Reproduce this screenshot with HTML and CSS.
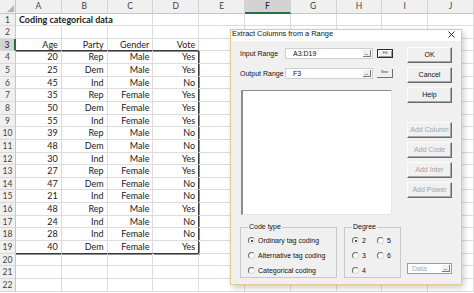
FILE: index.html
```html
<!DOCTYPE html>
<html>
<head>
<meta charset="utf-8">
<link rel="stylesheet" href="styles.css">
</head>
<body>
<div class="sheet">
  <div class="corner"><svg class="tri" width="7" height="7" viewBox="0 0 7 7"><path d="M7 0 V7 H0 Z" fill="#b4b4b4"/></svg></div>
  <div class="h">A</div><div class="h">B</div><div class="h">C</div><div class="h">D</div><div class="h">E</div><div class="h sel">F</div><div class="h">G</div><div class="h">H</div><div class="h">I</div><div class="h">J</div>

  <div class="r">1</div><div class="c title nob">Coding categorical data</div><div class="c nob"></div><div class="c"></div><div class="c"></div><div class="c"></div><div class="c"></div><div class="c"></div><div class="c"></div><div class="c"></div><div class="c"></div>
  <div class="r">2</div><div class="c"></div><div class="c"></div><div class="c"></div><div class="c"></div><div class="c"></div><div class="c"></div><div class="c"></div><div class="c"></div><div class="c"></div><div class="c"></div>
  <div class="r rsel">3</div><div class="c n th">Age</div><div class="c n th">Party</div><div class="c n th">Gender</div><div class="c n th">Vote</div><div class="c"></div><div class="c"></div><div class="c"></div><div class="c"></div><div class="c"></div><div class="c"></div>
  <div class="r">4</div><div class="c n">20</div><div class="c n">Rep</div><div class="c n">Male</div><div class="c n tr">Yes</div><div class="c"></div><div class="c"></div><div class="c"></div><div class="c"></div><div class="c"></div><div class="c"></div>
  <div class="r">5</div><div class="c n">25</div><div class="c n">Dem</div><div class="c n">Male</div><div class="c n tr">Yes</div><div class="c"></div><div class="c"></div><div class="c"></div><div class="c"></div><div class="c"></div><div class="c"></div>
  <div class="r">6</div><div class="c n">45</div><div class="c n">Ind</div><div class="c n">Male</div><div class="c n tr">No</div><div class="c"></div><div class="c"></div><div class="c"></div><div class="c"></div><div class="c"></div><div class="c"></div>
  <div class="r">7</div><div class="c n">35</div><div class="c n">Rep</div><div class="c n">Female</div><div class="c n tr">Yes</div><div class="c"></div><div class="c"></div><div class="c"></div><div class="c"></div><div class="c"></div><div class="c"></div>
  <div class="r">8</div><div class="c n">50</div><div class="c n">Dem</div><div class="c n">Female</div><div class="c n tr">Yes</div><div class="c"></div><div class="c"></div><div class="c"></div><div class="c"></div><div class="c"></div><div class="c"></div>
  <div class="r">9</div><div class="c n">55</div><div class="c n">Ind</div><div class="c n">Female</div><div class="c n tr">Yes</div><div class="c"></div><div class="c"></div><div class="c"></div><div class="c"></div><div class="c"></div><div class="c"></div>
  <div class="r">10</div><div class="c n">39</div><div class="c n">Rep</div><div class="c n">Male</div><div class="c n tr">No</div><div class="c"></div><div class="c"></div><div class="c"></div><div class="c"></div><div class="c"></div><div class="c"></div>
  <div class="r">11</div><div class="c n">48</div><div class="c n">Dem</div><div class="c n">Male</div><div class="c n tr">No</div><div class="c"></div><div class="c"></div><div class="c"></div><div class="c"></div><div class="c"></div><div class="c"></div>
  <div class="r">12</div><div class="c n">30</div><div class="c n">Ind</div><div class="c n">Male</div><div class="c n tr">Yes</div><div class="c"></div><div class="c"></div><div class="c"></div><div class="c"></div><div class="c"></div><div class="c"></div>
  <div class="r">13</div><div class="c n">27</div><div class="c n">Rep</div><div class="c n">Female</div><div class="c n tr">Yes</div><div class="c"></div><div class="c"></div><div class="c"></div><div class="c"></div><div class="c"></div><div class="c"></div>
  <div class="r">14</div><div class="c n">47</div><div class="c n">Dem</div><div class="c n">Female</div><div class="c n tr">No</div><div class="c"></div><div class="c"></div><div class="c"></div><div class="c"></div><div class="c"></div><div class="c"></div>
  <div class="r">15</div><div class="c n">21</div><div class="c n">Ind</div><div class="c n">Female</div><div class="c n tr">No</div><div class="c"></div><div class="c"></div><div class="c"></div><div class="c"></div><div class="c"></div><div class="c"></div>
  <div class="r">16</div><div class="c n">48</div><div class="c n">Rep</div><div class="c n">Male</div><div class="c n tr">Yes</div><div class="c"></div><div class="c"></div><div class="c"></div><div class="c"></div><div class="c"></div><div class="c"></div>
  <div class="r">17</div><div class="c n">24</div><div class="c n">Ind</div><div class="c n">Male</div><div class="c n tr">No</div><div class="c"></div><div class="c"></div><div class="c"></div><div class="c"></div><div class="c"></div><div class="c"></div>
  <div class="r">18</div><div class="c n">28</div><div class="c n">Ind</div><div class="c n">Female</div><div class="c n tr">No</div><div class="c"></div><div class="c"></div><div class="c"></div><div class="c"></div><div class="c"></div><div class="c"></div>
  <div class="r">19</div><div class="c n tb">40</div><div class="c n tb">Dem</div><div class="c n tb">Female</div><div class="c n tr tb">Yes</div><div class="c"></div><div class="c"></div><div class="c"></div><div class="c"></div><div class="c"></div><div class="c"></div>
  <div class="r">20</div><div class="c"></div><div class="c"></div><div class="c"></div><div class="c"></div><div class="c"></div><div class="c"></div><div class="c"></div><div class="c"></div><div class="c"></div><div class="c"></div>
  <div class="r">21</div><div class="c"></div><div class="c"></div><div class="c"></div><div class="c"></div><div class="c"></div><div class="c"></div><div class="c"></div><div class="c"></div><div class="c"></div><div class="c"></div>
  <div class="r">22</div><div class="c"></div><div class="c"></div><div class="c"></div><div class="c"></div><div class="c"></div><div class="c"></div><div class="c"></div><div class="c"></div><div class="c"></div><div class="c"></div>
</div>

<div class="dlg">
  <div class="titlebar">
    <span>Extract Columns from a Range</span>
    <svg class="close" width="7" height="7" viewBox="0 0 7 7"><path d="M0.5 0.5 L6.5 6.5 M6.5 0.5 L0.5 6.5" stroke="#111" stroke-width="0.9"/></svg>
  </div>
  <div class="dbody">
    <div class="main">
      <div class="frow">
        <span class="lbl">Input Range</span>
        <div class="tbox"><span>A3:D19</span><span class="mini">_</span></div>
        <span class="tiny fill">Fill</span>
      </div>
      <div class="frow r2">
        <span class="lbl">Output Range</span>
        <div class="tbox"><span>F3</span><span class="mini">_</span></div>
        <span class="tiny new">New</span>
      </div>
      <div class="list"></div>
      <div class="groups">
        <fieldset class="grp code">
          <legend>Code type</legend>
          <div class="opt"><span class="radio on"></span>Ordinary tag coding</div>
          <div class="opt"><span class="radio"></span>Alternative tag coding</div>
          <div class="opt"><span class="radio"></span>Categorical coding</div>
        </fieldset>
        <fieldset class="grp deg">
          <legend>Degree</legend>
          <div class="degrid">
            <div class="opt"><span class="radio on"></span>2</div>
            <div class="opt"><span class="radio"></span>5</div>
            <div class="opt"><span class="radio"></span>3</div>
            <div class="opt"><span class="radio"></span>6</div>
            <div class="opt"><span class="radio"></span>4</div>
          </div>
        </fieldset>
      </div>
    </div>
    <div class="side">
      <div class="btn">OK</div>
      <div class="btn">Cancel</div>
      <div class="btn">Help</div>
      <div class="btn dis first">Add Column</div>
      <div class="btn dis">Add Code</div>
      <div class="btn dis">Add Inter</div>
      <div class="btn dis">Add Power</div>
      <div class="data"><span>Data</span><span class="mini">_</span></div>
    </div>
  </div>
</div>
</body>
</html>
```
FILE: styles.css
```css
* { box-sizing: border-box; }
html, body { margin: 0; padding: 0; }
body {
  width: 474px;
  height: 293px;
  overflow: hidden;
  position: relative;
  background: #fff;
  font-family: Lato, "Liberation Sans", sans-serif;
}
.sheet {
  display: grid;
  grid-template-columns: 16px repeat(10, 45.8px);
  grid-template-rows: 13.5px repeat(22, 12.65px);
}
.corner {
  background: #f0f0f0;
  border-right: 1px solid #c6c6c6;
  border-bottom: 1px solid #c6c6c6;
  display: flex;
  align-items: flex-end;
  justify-content: flex-end;
  padding: 0 1px 1px 0;
}
.h {
  background: #f0f0f0;
  border-right: 1px solid #d4d4d4;
  border-bottom: 1px solid #c6c6c6;
  color: #444;
  font-size: 8.5px;
  line-height: 12px;
  text-align: center;
}
.h.sel {
  background: #d3d3d3;
  border-bottom: 2px solid #217346;
  color: #222;
}
.r {
  background: #f0f0f0;
  border-right: 1px solid #c6c6c6;
  border-bottom: 1px solid #dadada;
  color: #444;
  font-size: 8.5px;
  line-height: 12px;
  text-align: center;
}
.r.rsel {
  background: #d3d3d3;
  border-right: 2px solid #217346;
  color: #222;
}
.c {
  border-right: 1px solid #dcdcdc;
  border-bottom: 1px solid #dcdcdc;
  font-size: 9px;
  line-height: 12px;
  padding: 0 3px;
  white-space: nowrap;
  color: #1a1a1a;
}
.c.n { text-align: right; }
.c.nob { border-right-color: transparent; }
.c.title { font-weight: bold; overflow: visible; position: relative; z-index: 1; }
.c.th { border-bottom: 1px solid #3a3a3a; box-shadow: 0 1px 0 #8a8a8a; }
.c.tr { border-right: 1px solid #3a3a3a; box-shadow: 1px 0 0 #8a8a8a; }
.c.tb { border-bottom: 1px solid #3a3a3a; box-shadow: 0 1px 0 #8a8a8a; }
.c.tr.tb { box-shadow: 1px 1px 0 #8a8a8a; }

/* dialog */
.dlg {
  position: absolute;
  left: 230px;
  top: 29px;
  width: 232px;
  height: 256px;
  border: 1px solid #e5c98e;
  background: #f0f0f0;
  box-shadow: 2px 3px 6px rgba(0, 0, 0, 0.2);
  font-family: "Liberation Sans", Arial, sans-serif;
  font-size: 7px;
  color: #111;
}
.titlebar {
  height: 11px;
  background: #fff;
  display: flex;
  justify-content: space-between;
  align-items: flex-start;
  padding: 0 6px 0 1px;
  font-size: 7.4px;
  line-height: 8px;
}
.close { display: block; margin-top: 1px; }
.dbody {
  display: flex;
  gap: 6px;
  padding: 6px 9px 0;
}
.main {
  width: 161px;
  display: flex;
  flex-direction: column;
}
.frow {
  display: flex;
  align-items: center;
  height: 12px;
}
.frow.r2 { margin-top: 8px; }
.lbl { width: 45px; }
.tbox {
  width: 88px;
  height: 11px;
  background: #fff;
  border: 1px solid #cfcfcf;
  display: flex;
  justify-content: space-between;
  align-items: center;
  padding-left: 7px;
  padding-right: 1px;
}
.mini {
  width: 8px;
  height: 7px;
  background: #f0f0f0;
  border-right: 1px solid #777;
  border-bottom: 1px solid #777;
  font-size: 6px;
  line-height: 4px;
  text-align: center;
  color: #222;
}
.tiny {
  margin-left: 4px;
  width: 16px;
  height: 9px;
  font-size: 3.6px;
  line-height: 7px;
  text-align: center;
  color: #333;
  background: #f0f0f0;
}
.fill {
  border: 1px solid #2c2c2c;
  box-shadow: inset 1px 1px #fff, inset -1px -1px #9a9a9a;
}
.new {
  border-right: 1px solid #707070;
  border-bottom: 1px solid #707070;
}
.list {
  margin: 11px 0 0 1px;
  width: 151px;
  height: 125px;
  background: #fff;
  border-top: 1px solid #8c8c8c;
  border-left: 2px solid #8c8c8c;
  border-right: 1px solid #e6e6e6;
  border-bottom: 1px solid #e6e6e6;
}
.groups {
  display: flex;
  gap: 7px;
  margin-top: 8px;
}
.grp {
  margin: 0;
  padding: 2px 0 0 7px;
  border: 1px solid #c8c8c8;
  height: 55px;
  min-width: 0;
}
.grp.code { width: 97px; }
.grp.deg { width: 57px; }
.grp legend {
  padding: 0 1px;
  font-size: 7px;
  line-height: 8px;
}
.opt {
  display: flex;
  align-items: center;
  gap: 3px;
  height: 15px;
  white-space: nowrap;
}
.degrid {
  display: grid;
  grid-template-columns: 25px auto;
}
.radio {
  width: 7px;
  height: 7px;
  border-radius: 50%;
  border: 1px solid;
  border-color: #6a6a6a #d8d8d8 #d8d8d8 #6a6a6a;
  background: #fff;
  display: flex;
  align-items: center;
  justify-content: center;
  flex: none;
}
.radio.on::after {
  content: "";
  width: 2px;
  height: 2px;
  border-radius: 50%;
  background: #111;
}
.side {
  width: 45px;
  display: flex;
  flex-direction: column;
  gap: 4px;
}
.btn {
  height: 16px;
  border: 1px solid;
  border-color: #fcfcfc #6a6a6a #6a6a6a #fcfcfc;
  box-shadow: inset -1px -1px #a8a8a8;
  background: #f0f0f0;
  text-align: center;
  line-height: 14px;
  font-size: 7px;
  color: #111;
}
.btn.dis { color: #a4a4a4; }
.btn.first { margin-top: 15px; }
.data {
  margin-top: 61px;
  height: 11px;
  background: #fff;
  border: 1px solid #9c9c9c;
  display: flex;
  justify-content: space-between;
  align-items: center;
  padding: 0 1px 0 4px;
  color: #a8a8a8;
}
```
